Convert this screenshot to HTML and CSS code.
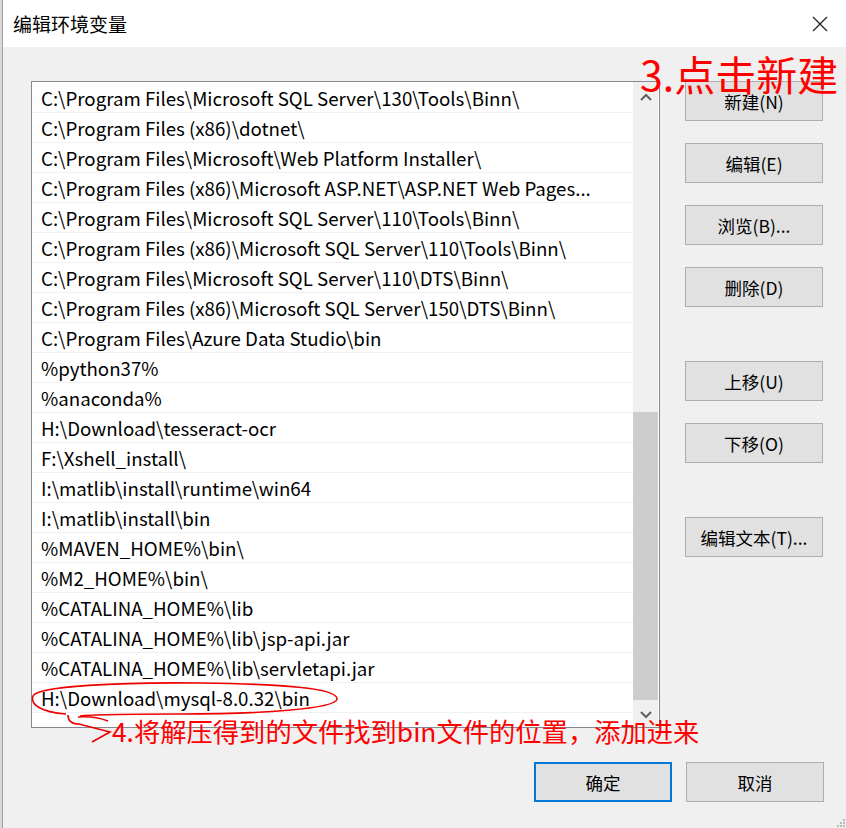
FILE: index.html
```html
<!DOCTYPE html>
<html lang="zh-CN">
<head>
    <meta charset="UTF-8">
    <meta name="viewport" content="width=device-width, initial-scale=1.0">
    <title>编辑环境变量</title>
    <link rel="stylesheet" href="styles.css">
</head>
<body>
    <div class="behind"></div>
    <div class="dialog">
        <div class="titlebar">
            <span class="title">编辑环境变量</span>
            <svg class="close" width="16" height="16" viewBox="0 0 16 16">
                <path d="M1 1 L15 15 M15 1 L1 15" stroke="#222" stroke-width="1.3" fill="none"/>
            </svg>
        </div>

        <div class="content">
            <div class="list">
                <div class="rows">
                    <div class="row">C:\Program Files\Microsoft SQL Server\130\Tools\Binn\</div>
                    <div class="row">C:\Program Files (x86)\dotnet\</div>
                    <div class="row">C:\Program Files\Microsoft\Web Platform Installer\</div>
                    <div class="row">C:\Program Files (x86)\Microsoft ASP.NET\ASP.NET Web Pages...</div>
                    <div class="row">C:\Program Files\Microsoft SQL Server\110\Tools\Binn\</div>
                    <div class="row">C:\Program Files (x86)\Microsoft SQL Server\110\Tools\Binn\</div>
                    <div class="row">C:\Program Files\Microsoft SQL Server\110\DTS\Binn\</div>
                    <div class="row">C:\Program Files (x86)\Microsoft SQL Server\150\DTS\Binn\</div>
                    <div class="row">C:\Program Files\Azure Data Studio\bin</div>
                    <div class="row">%python37%</div>
                    <div class="row">%anaconda%</div>
                    <div class="row">H:\Download\tesseract-ocr</div>
                    <div class="row">F:\Xshell_install\</div>
                    <div class="row">I:\matlib\install\runtime\win64</div>
                    <div class="row">I:\matlib\install\bin</div>
                    <div class="row">%MAVEN_HOME%\bin\</div>
                    <div class="row">%M2_HOME%\bin\</div>
                    <div class="row">%CATALINA_HOME%\lib</div>
                    <div class="row">%CATALINA_HOME%\lib\jsp-api.jar</div>
                    <div class="row">%CATALINA_HOME%\lib\servletapi.jar</div>
                    <div class="row">H:\Download\mysql-8.0.32\bin</div>
                    <div class="row"></div>
                </div>
                <div class="scrollbar">
                    <svg class="arrow" width="12" height="8" viewBox="0 0 12 8">
                        <path d="M1 7 L6 2 L11 7" stroke="#606060" stroke-width="2" fill="none"/>
                    </svg>
                    <div class="track">
                        <div class="thumb"></div>
                    </div>
                    <svg class="arrow" width="12" height="8" viewBox="0 0 12 8">
                        <path d="M1 1 L6 6 L11 1" stroke="#606060" stroke-width="2" fill="none"/>
                    </svg>
                </div>
            </div>

            <div class="side">
                <div class="group">
                    <button class="btn">新建(N)</button>
                    <button class="btn">编辑(E)</button>
                    <button class="btn">浏览(B)...</button>
                    <button class="btn">删除(D)</button>
                </div>
                <div class="group">
                    <button class="btn">上移(U)</button>
                    <button class="btn">下移(O)</button>
                </div>
                <div class="group">
                    <button class="btn">编辑文本(T)...</button>
                </div>
            </div>
        </div>

        <div class="footer">
            <button class="btn primary">确定</button>
            <button class="btn">取消</button>
        </div>

        <svg class="grip" width="10" height="10" viewBox="0 0 10 10">
            <rect x="7" y="1" width="2" height="2" fill="#bbb"/>
            <rect x="4" y="4" width="2" height="2" fill="#bbb"/>
            <rect x="7" y="4" width="2" height="2" fill="#bbb"/>
            <rect x="1" y="7" width="2" height="2" fill="#bbb"/>
            <rect x="4" y="7" width="2" height="2" fill="#bbb"/>
            <rect x="7" y="7" width="2" height="2" fill="#bbb"/>
        </svg>
    </div>

    <!-- red notes drawn over the screenshot -->
    <div class="note note-new">3.点击新建</div>
    <div class="note note-path">4.将解压得到的文件找到bin文件的位置，添加进来</div>
    <svg class="marks" width="846" height="828" viewBox="0 0 846 828">
        <path d="M66 714 C 40 712, 30 704, 33 696 C 38 686, 120 682, 200 683 C 280 684, 338 688, 337 699 C 336 709, 260 714, 180 714 C 130 714, 95 714, 80 716"
              stroke="#e00" stroke-width="1.6" fill="none"/>
        <path d="M68 715 C 68 721, 72 724, 79 724 L 110 732 L 92 742"
              stroke="#e00" stroke-width="1.6" fill="none"/>
        <path d="M78 717 C 90 716, 100 718, 108 721"
              stroke="#e00" stroke-width="1.4" fill="none"/>
    </svg>
</body>
</html>
```

FILE: styles.css
```css
* {
    box-sizing: border-box;
}

body {
    margin: 0;
    padding: 0;
    width: 846px;
    height: 828px;
    overflow: hidden;
    display: flex;
    position: relative;
    background-color: #f0f0f0;
    font-family: "Noto Sans CJK SC", "Noto Sans", sans-serif;
    color: #000;
}

.behind {
    width: 3px;
    background-color: #d9d9d9;
    border-right: 1px solid #a0a0a0;
}

.dialog {
    flex: 1;
    display: flex;
    flex-direction: column;
    position: relative;
}

.titlebar {
    height: 47px;
    background-color: #fff;
    display: flex;
    align-items: center;
    justify-content: space-between;
    padding: 0 18px 0 10px;
}

.title {
    font-size: 19px;
    color: #000;
}

.content {
    display: flex;
    padding: 34px 0 0 28px;
}

.list {
    width: 629px;
    height: 647px;
    border: 1px solid #828790;
    background-color: #fff;
    display: flex;
    overflow: hidden;
}

.rows {
    width: 601px;
    padding-top: 1px;
}

.row {
    height: 30px;
    line-height: 29px;
    border-bottom: 1px solid #f0f0f0;
    padding-left: 9px;
    font-size: 18.7px;
    white-space: nowrap;
    overflow: hidden;
}

.scrollbar {
    width: 25px;
    margin-right: 1px;
    background-color: #f0f0f0;
    display: flex;
    flex-direction: column;
    align-items: center;
}

.arrow {
    margin: 11px 0;
    flex-shrink: 0;
}

.track {
    flex: 1;
    width: 100%;
    padding-top: 300px;
}

.thumb {
    height: 288px;
    background-color: #cdcdcd;
}

.side {
    margin-left: 25px;
    display: flex;
    flex-direction: column;
    gap: 54px;
}

.group {
    display: flex;
    flex-direction: column;
    gap: 22px;
}

.btn {
    width: 138px;
    height: 40px;
    border: 1px solid #adadad;
    background-color: #e1e1e1;
    font-family: "Noto Sans CJK SC", "Noto Sans", sans-serif;
    font-size: 17.5px;
    color: #000;
    padding: 0;
}

.footer {
    display: flex;
    justify-content: flex-end;
    gap: 14px;
    padding: 34px 22px 0 0;
}

.btn.primary {
    border: 2px solid #0078d7;
}

.grip {
    position: absolute;
    right: 0;
    bottom: 0;
}

.note {
    position: absolute;
    color: #ff0000;
    white-space: nowrap;
    font-family: "Noto Sans CJK SC", sans-serif;
}

.note-new {
    left: 640px;
    top: 45px;
    font-size: 41px;
    line-height: 56px;
}

.note-path {
    left: 112px;
    top: 713px;
    font-size: 26.3px;
    line-height: 36px;
}

.marks {
    position: absolute;
    left: 0;
    top: 0;
    pointer-events: none;
}
```
